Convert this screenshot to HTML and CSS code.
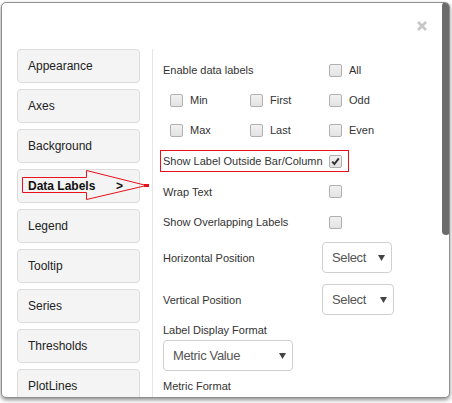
FILE: index.html
```html
<!DOCTYPE html>
<html>
<head>
<meta charset="utf-8">
<title>Chart settings</title>
<link rel="stylesheet" href="styles.css">
</head>
<body>
<div class="modal">
  <div class="modal-header">
    <button class="close" aria-label="Close"><svg width="10" height="10" viewBox="0 0 10 10"><path d="M1 1L9 9M9 1L1 9" stroke="#c6c6c6" stroke-width="2.6"/></svg></button>
  </div>
  <div class="modal-body">
    <nav class="tabs">
      <div class="tab">Appearance</div>
      <div class="tab">Axes</div>
      <div class="tab">Background</div>
      <div class="tab active">Data Labels <span class="chev">&gt;</span></div>
      <div class="tab">Legend</div>
      <div class="tab">Tooltip</div>
      <div class="tab">Series</div>
      <div class="tab">Thresholds</div>
      <div class="tab">PlotLines</div>
    </nav>
    <div class="panel">
      <div class="row row-enable"><span class="lbl">Enable data labels</span><label class="chk"><span class="box"></span>All</label></div>
      <div class="chk-grid">
        <label class="chk"><span class="box"></span>Min</label>
        <label class="chk"><span class="box"></span>First</label>
        <label class="chk"><span class="box"></span>Odd</label>
        <label class="chk"><span class="box"></span>Max</label>
        <label class="chk"><span class="box"></span>Last</label>
        <label class="chk"><span class="box"></span>Even</label>
      </div>
      <div class="row row-highlight"><span class="lbl">Show Label Outside Bar/Column</span><span class="box checked"><svg width="11" height="11" viewBox="0 0 11 11"><path d="M2.2 5.6L4.4 8L8.8 2.4" fill="none" stroke="#333" stroke-width="2"/></svg></span></div>
      <div class="row row-wrap"><span class="lbl">Wrap Text</span><span class="box"></span></div>
      <div class="row row-overlap"><span class="lbl">Show Overlapping Labels</span><span class="box"></span></div>
      <div class="row row-hpos"><span class="lbl lbl-sel">Horizontal Position</span><div class="select sel-h"><span>Select</span><svg width="7" height="6" viewBox="0 0 7 6"><path d="M0 0H7L3.5 6Z" fill="#444"/></svg></div></div>
      <div class="row row-vpos"><span class="lbl lbl-sel">Vertical Position</span><div class="select sel-v"><span>Select</span><svg width="7" height="6" viewBox="0 0 7 6"><path d="M0 0H7L3.5 6Z" fill="#444"/></svg></div></div>
      <div class="field-label fl-display">Label Display Format</div>
      <div class="select sel-metric"><span>Metric Value</span><svg width="7" height="6" viewBox="0 0 7 6"><path d="M0 0H7L3.5 6Z" fill="#444"/></svg></div>
      <div class="field-label fl-format">Metric Format</div>
      <div class="select sel-format"><span></span></div>
    </div>
  </div>
  <div class="thumb"></div>
</div>
<svg class="annot" width="452" height="403" viewBox="0 0 452 403">
  <polygon points="22.5,177.5 86.5,177.5 86.5,170.5 146.5,185.5 86.5,199.5 86.5,192.5 22.5,192.5" fill="none" stroke="#e8101a" stroke-width="1"/>
  <rect x="144" y="184" width="5" height="3" fill="#e8101a"/>
</svg>
</body>
</html>
```
FILE: styles.css
```css
body {
  margin: 0;
  width: 452px;
  height: 403px;
  overflow: hidden;
  position: relative;
  background: #fff;
  font-family: "Liberation Sans", Arial, sans-serif;
  color: #333;
}

.modal {
  position: relative;
  margin: 2px 0 0 1px;
  width: 449px;
  height: 396px;
  box-sizing: border-box;
  border: 1px solid #8e8e8e;
  border-radius: 5px;
  background: #fff;
  box-shadow: 0 2px 4px rgba(0, 0, 0, 0.45);
  overflow: hidden;
}

.modal-header {
  height: 46px;
  box-sizing: border-box;
  display: flex;
  justify-content: flex-end;
  align-items: flex-start;
  padding: 18px 22px 0 0;
}

.close {
  border: 0;
  background: none;
  padding: 0;
  width: 10px;
  height: 10px;
  display: block;
}
.close svg { display: block; }

.modal-body {
  display: flex;
  height: 350px;
}

.tabs {
  padding-left: 15px;
  margin-right: 12px;
  width: 123px;
  flex: none;
  display: flex;
  flex-direction: column;
  gap: 6px;
}

.tab {
  height: 34px;
  flex: none;
  box-sizing: border-box;
  border: 1px solid #dcdcdc;
  border-radius: 4px;
  background: #f4f4f4;
  padding: 0 16px 0 10px;
  display: flex;
  align-items: center;
  font-size: 12px;
  color: #222;
}

.tab.active {
  font-weight: bold;
  color: #111;
}

.chev {
  margin-left: auto;
}

.panel {
  flex: 1;
  border-left: 1px solid #e6e6e6;
  padding: 6px 0 0 10px;
  font-size: 11px;
  color: #333;
}

.row {
  display: flex;
  align-items: center;
}

.lbl {
  width: 166px;
  flex: none;
}

.row-enable { height: 30px; }

.chk {
  display: flex;
  align-items: center;
  gap: 7px;
}

.box {
  width: 13px;
  height: 13px;
  flex: none;
  box-sizing: border-box;
  border: 1px solid #b0b0b0;
  border-radius: 2px;
  background: linear-gradient(#f1f1f1, #e3e3e3);
  display: flex;
  align-items: center;
  justify-content: center;
}
.box svg { display: block; }

.chk-grid {
  display: grid;
  grid-template-columns: 80px 79px auto;
  grid-auto-rows: 30px;
  align-items: center;
  padding-left: 7px;
}

.row-highlight {
  margin: 5px 0 0 -3px;
  width: 189px;
  height: 22px;
  box-sizing: border-box;
  border: 1px solid #e8101a;
  padding-left: 2px;
}

.row-wrap { height: 31px; margin-top: 4px; }
.row-overlap { height: 30px; }

.lbl-sel { width: 159px; }

.row-hpos { margin-top: 5px; }
.row-vpos { margin-top: 11px; }

.select {
  height: 31px;
  box-sizing: border-box;
  border: 1px solid #cfcfcf;
  border-radius: 4px;
  background: #fff;
  display: flex;
  align-items: center;
  justify-content: space-between;
  padding: 0 6px 0 9px;
  font-size: 13px;
  letter-spacing: -0.35px;
  color: #555;
}
.select svg { display: block; }

.sel-h { width: 70px; }
.sel-v { width: 72px; }
.sel-metric { width: 130px; margin-top: 3px; }
.sel-format { width: 153px; margin-top: 4px; }

.field-label {
  line-height: 14px;
  height: 14px;
}
.fl-display { margin-top: 8px; }
.fl-format { margin-top: 8px; }

.thumb {
  position: absolute;
  top: -1px;
  right: -1px;
  width: 8px;
  height: 233px;
  border-radius: 4px;
  background: #6b6b6b;
}

.annot {
  position: absolute;
  left: 0;
  top: 0;
  pointer-events: none;
}
```
